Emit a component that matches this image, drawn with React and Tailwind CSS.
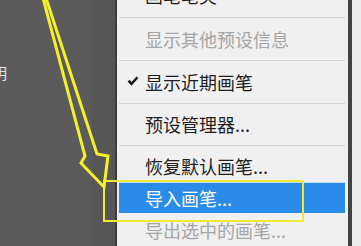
import React from 'react';

const font = { fontFamily: '"Noto Sans CJK SC", "Noto Sans", sans-serif' };

const App = () => {
  return (
    <div className="relative flex w-[361px] h-[246px] overflow-hidden bg-[#5a5a5a]" style={font}>
      {/* fondo izquierdo */}
      <div className="flex w-[115px] shrink-0">
        <div className="w-[92px] bg-[#5b5b5b] pt-[63px]">
          <span className="block ml-[-8px] text-[15px] leading-[20px] text-[#e2e2e2]">明</span>
        </div>
        <div className="flex-1 bg-[#565656]" />
      </div>

      {/* menú */}
      <div className="flex flex-col w-[237px] shrink-0 bg-[#f0f0f0] border-l-2 border-[#3c3c3c] border-r-4 border-r-[#424242]">
        <div className="mt-[-21px] h-[33px] flex items-center pl-[28px] text-[18px] leading-none text-[#1e1e1e]">画笔笔尖</div>
        <div className="h-px mt-[6px] mb-[5px] ml-[2px] mr-[3px] bg-[#d2d2d2]" />
        <div className="h-[33px] flex items-center pl-[28px] text-[18px] leading-none text-[#a6a6a6]">显示其他预设信息</div>
        <div className="h-px my-[5px] ml-[2px] mr-[3px] bg-[#d2d2d2]" />
        <div className="h-[33px] flex items-center text-[18px] leading-none text-[#1e1e1e]">
          <div className="w-[28px] flex justify-center pl-[3px]">
            <svg width="12" height="11" viewBox="0 0 12 11">
              <path d="M0.6 5.6 L2.6 3.8 L4.5 6 L9.6 0.4 L11.4 2 L4.5 9.8 Z" fill="#1a1a1a" />
            </svg>
          </div>
          <span>显示近期画笔</span>
        </div>
        <div className="h-px my-[5px] ml-[2px] mr-[3px] bg-[#d2d2d2]" />
        <div className="h-[33px] flex items-center pl-[28px] text-[18px] leading-none text-[#1e1e1e]">预设管理器...</div>
        <div className="h-px mt-[5px] mb-[4px] ml-[2px] mr-[3px] bg-[#d2d2d2]" />
        <div className="h-[33px] flex items-center pl-[28px] text-[18px] leading-none text-[#1e1e1e]">恢复默认画笔...</div>
        <div className="h-[32px] flex items-center ml-[2px] mr-[3px] pl-[26px] bg-[#2a8ce8] border-t border-[#bfe0ff] text-[18px] leading-none text-white">导入画笔...</div>
        <div className="h-[34px] flex items-center pl-[28px] text-[18px] leading-none text-[#a6a6a6]">导出选中的画笔...</div>
      </div>

      <div className="flex-1 bg-[#ebebeb]" />

      {/* anotación amarilla */}
      <div className="absolute left-[103px] top-[180px] w-[201px] h-[42px] border-2 border-[#efeb34]" />
      <svg className="absolute left-0 top-0" width="361" height="246" viewBox="0 0 361 246">
        <polygon
          points="43,-2 85,156 81,163 104,187 108,156 97,154 46,-2"
          fill="none"
          stroke="#f4f02a"
          strokeWidth="3"
          strokeLinejoin="miter"
        />
      </svg>
    </div>
  );
};

export default App;
